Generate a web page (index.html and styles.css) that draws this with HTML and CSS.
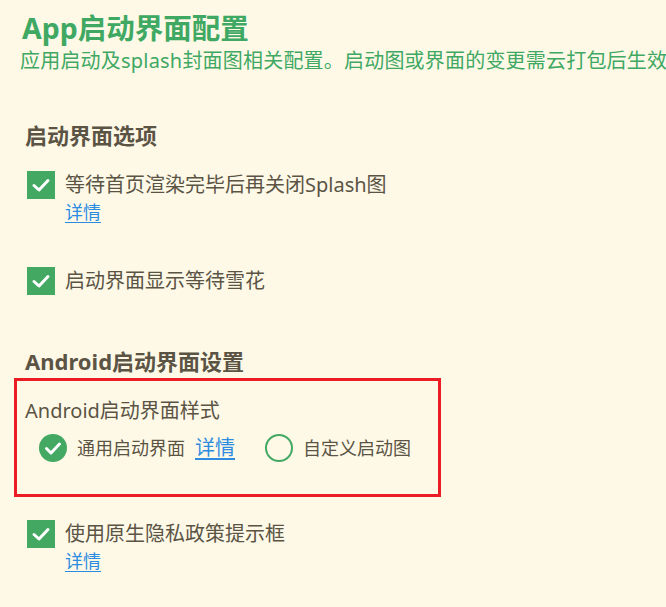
FILE: index.html
```html
<!DOCTYPE html>
<html lang="zh-CN">
<head>
<meta charset="utf-8">
<title>App启动界面配置</title>
<link rel="stylesheet" href="styles.css">
</head>
<body>
<main class="page">
  <header class="head">
    <h1 class="title">App启动界面配置</h1>
    <p class="subtitle">应用启动及splash封面图相关配置。启动图或界面的变更需云打包后生效</p>
  </header>

  <section class="section">
    <h2 class="section-title">启动界面选项</h2>
    <div class="check-item">
      <span class="check-box"><svg viewBox="0 0 28 28" width="28" height="28"><polyline points="7,14.5 12,19 21,9.5" fill="none" stroke="#fff" stroke-width="3" stroke-linecap="round" stroke-linejoin="round"/></svg></span>
      <span class="check-label">等待首页渲染完毕后再关闭Splash图</span>
      <a class="detail" href="#">详情</a>
    </div>
    <div class="check-item check-item-gap">
      <span class="check-box"><svg viewBox="0 0 28 28" width="28" height="28"><polyline points="7,14.5 12,19 21,9.5" fill="none" stroke="#fff" stroke-width="3" stroke-linecap="round" stroke-linejoin="round"/></svg></span>
      <span class="check-label">启动界面显示等待雪花</span>
    </div>
  </section>

  <section class="section section-android">
    <h2 class="section-title">Android启动界面设置</h2>
    <div class="highlight">
      <div class="field-label">Android启动界面样式</div>
      <div class="radio-row">
        <span class="radio radio-on"><svg viewBox="0 0 28 28" width="28" height="28"><polyline points="7.5,14.5 12,19 20.5,10" fill="none" stroke="#fff" stroke-width="3" stroke-linecap="round" stroke-linejoin="round"/></svg></span>
        <span class="radio-label">通用启动界面</span>
        <a class="detail detail-radio" href="#">详情</a>
        <span class="radio radio-off"></span>
        <span class="radio-label">自定义启动图</span>
      </div>
    </div>
    <div class="check-item check-item-last">
      <span class="check-box"><svg viewBox="0 0 28 28" width="28" height="28"><polyline points="7,14.5 12,19 21,9.5" fill="none" stroke="#fff" stroke-width="3" stroke-linecap="round" stroke-linejoin="round"/></svg></span>
      <span class="check-label">使用原生隐私政策提示框</span>
      <a class="detail" href="#">详情</a>
    </div>
  </section>
</main>
</body>
</html>
```

FILE: styles.css
```css
html, body {
  margin: 0;
  padding: 0;
  background: #fef9e7;
}

body {
  font-family: "Noto Sans", "Noto Sans CJK SC", sans-serif;
  color: #5b5445;
  overflow: hidden;
}

.page {
  padding: 8px 0 0 22px;
}

.head {
  color: #3fa863;
}

.title {
  margin: 0;
  font-size: 28.5px;
  line-height: 40px;
  font-weight: 700;
}

.subtitle {
  margin: 0;
  margin-left: -2px;
  font-size: 20px;
  line-height: 26px;
  letter-spacing: 0.2px;
  white-space: nowrap;
}

.section {
  margin-top: 46px;
}

.section-title {
  margin: 0 0 0 3px;
  font-size: 22px;
  line-height: 30px;
  font-weight: 700;
  color: #5b5445;
}

.check-item {
  display: grid;
  grid-template-columns: 28px auto;
  column-gap: 10px;
  row-gap: 2px;
  margin: 21px 0 0 5px;
  justify-items: start;
  align-items: center;
}

.check-item-gap {
  margin-top: 44px;
}

.check-box {
  width: 28px;
  height: 28px;
  background: #42a862;
  display: block;
}

.check-box svg {
  display: block;
}

.check-label {
  font-size: 20px;
  line-height: 28px;
}

.detail {
  grid-column: 2;
  font-size: 18px;
  line-height: 22px;
  color: #2d8ce0;
  text-decoration: underline;
  text-underline-offset: 3px;
}

.section-android {
  margin-top: 51px;
}

.highlight {
  margin: 2px 0 0 -8px;
  width: 427px;
  height: 119px;
  border: 3px solid #ec1c24;
  padding: 17px 0 0 8px;
  box-sizing: border-box;
}

.field-label {
  font-size: 20px;
  line-height: 26px;
}

.radio-row {
  display: flex;
  align-items: center;
  margin: 10px 0 0 14px;
}

.radio {
  width: 28px;
  height: 28px;
  border-radius: 50%;
  box-sizing: border-box;
  flex: none;
}

.radio svg {
  display: block;
}

.radio-on {
  background: #42a862;
}

.radio-off {
  border: 2.5px solid #42a862;
  margin-left: 30px;
}

.radio-label {
  font-size: 18px;
  line-height: 28px;
  margin-left: 10px;
}

.detail-radio {
  font-size: 20px;
  margin-left: 10px;
}

.check-item-last {
  margin-top: 23px;
}
```
